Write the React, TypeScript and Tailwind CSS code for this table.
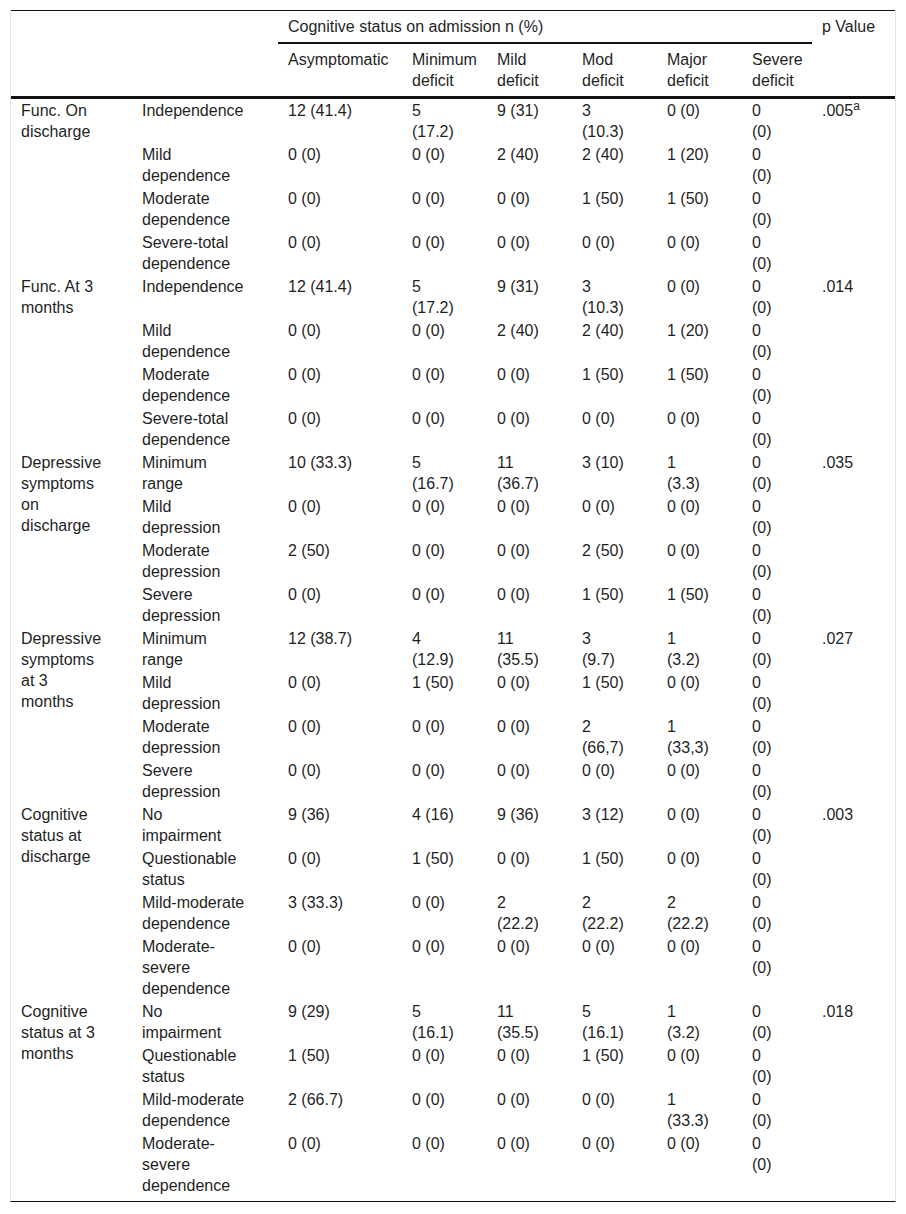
import React from "react";

type Row = { label: string; cells: string[] };
type Group = { label: string; p: React.ReactNode; rows: Row[] };

const funcRows: Row[] = [
  { label: "Independence", cells: ["12 (41.4)", "5|(17.2)", "9 (31)", "3|(10.3)", "0 (0)", "0|(0)"] },
  { label: "Mild|dependence", cells: ["0 (0)", "0 (0)", "2 (40)", "2 (40)", "1 (20)", "0|(0)"] },
  { label: "Moderate|dependence", cells: ["0 (0)", "0 (0)", "0 (0)", "1 (50)", "1 (50)", "0|(0)"] },
  { label: "Severe-total|dependence", cells: ["0 (0)", "0 (0)", "0 (0)", "0 (0)", "0 (0)", "0|(0)"] },
];

const groups: Group[] = [
  {
    label: "Func. On|discharge",
    p: (
      <>
        .005<sup className="text-[12px]">a</sup>
      </>
    ),
    rows: funcRows,
  },
  { label: "Func. At 3|months", p: ".014", rows: funcRows },
  {
    label: "Depressive|symptoms|on|discharge",
    p: ".035",
    rows: [
      { label: "Minimum|range", cells: ["10 (33.3)", "5|(16.7)", "11|(36.7)", "3 (10)", "1|(3.3)", "0|(0)"] },
      { label: "Mild|depression", cells: ["0 (0)", "0 (0)", "0 (0)", "0 (0)", "0 (0)", "0|(0)"] },
      { label: "Moderate|depression", cells: ["2 (50)", "0 (0)", "0 (0)", "2 (50)", "0 (0)", "0|(0)"] },
      { label: "Severe|depression", cells: ["0 (0)", "0 (0)", "0 (0)", "1 (50)", "1 (50)", "0|(0)"] },
    ],
  },
  {
    label: "Depressive|symptoms|at 3|months",
    p: ".027",
    rows: [
      { label: "Minimum|range", cells: ["12 (38.7)", "4|(12.9)", "11|(35.5)", "3|(9.7)", "1|(3.2)", "0|(0)"] },
      { label: "Mild|depression", cells: ["0 (0)", "1 (50)", "0 (0)", "1 (50)", "0 (0)", "0|(0)"] },
      { label: "Moderate|depression", cells: ["0 (0)", "0 (0)", "0 (0)", "2|(66,7)", "1|(33,3)", "0|(0)"] },
      { label: "Severe|depression", cells: ["0 (0)", "0 (0)", "0 (0)", "0 (0)", "0 (0)", "0|(0)"] },
    ],
  },
  {
    label: "Cognitive|status at|discharge",
    p: ".003",
    rows: [
      { label: "No|impairment", cells: ["9 (36)", "4 (16)", "9 (36)", "3 (12)", "0 (0)", "0|(0)"] },
      { label: "Questionable|status", cells: ["0 (0)", "1 (50)", "0 (0)", "1 (50)", "0 (0)", "0|(0)"] },
      { label: "Mild-moderate|dependence", cells: ["3 (33.3)", "0 (0)", "2|(22.2)", "2|(22.2)", "2|(22.2)", "0|(0)"] },
      { label: "Moderate-|severe|dependence", cells: ["0 (0)", "0 (0)", "0 (0)", "0 (0)", "0 (0)", "0|(0)"] },
    ],
  },
  {
    label: "Cognitive|status at 3|months",
    p: ".018",
    rows: [
      { label: "No|impairment", cells: ["9 (29)", "5|(16.1)", "11|(35.5)", "5|(16.1)", "1|(3.2)", "0|(0)"] },
      { label: "Questionable|status", cells: ["1 (50)", "0 (0)", "0 (0)", "1 (50)", "0 (0)", "0|(0)"] },
      { label: "Mild-moderate|dependence", cells: ["2 (66.7)", "0 (0)", "0 (0)", "0 (0)", "1|(33.3)", "0|(0)"] },
      { label: "Moderate-|severe|dependence", cells: ["0 (0)", "0 (0)", "0 (0)", "0 (0)", "0 (0)", "0|(0)"] },
    ],
  },
];

function Lines({ text }: { text: string }) {
  const parts = text.split("|");
  return (
    <>
      {parts.map((p, i) => (
        <React.Fragment key={i}>
          {i > 0 && <br />}
          {p}
        </React.Fragment>
      ))}
    </>
  );
}

const td = "align-top text-left py-px pl-[10px] pr-0 whitespace-nowrap font-normal";
const th = "align-top text-left pt-[5px] pb-[5px] pl-[10px] pr-0 whitespace-nowrap font-normal";

export default function App() {
  return (
    <div
      className="bg-white text-[#1f1f1f] text-[16px] leading-[21px] min-h-[1214px]"
      style={{ fontFamily: '"Liberation Sans", Arial, sans-serif' }}
    >
      <div className="pt-[10px] pl-[10px]">
        <div className="w-[886px] border-l border-r border-[#e2e2e2] border-b border-b-[#111] pb-[4px]">
          <table className="table-fixed border-separate border-spacing-0 w-[884px]">
            <colgroup>
              <col className="w-[121px]" />
              <col className="w-[146px]" />
              <col className="w-[124px]" />
              <col className="w-[85px]" />
              <col className="w-[85px]" />
              <col className="w-[85px]" />
              <col className="w-[85px]" />
              <col className="w-[70px]" />
              <col className="w-[83px]" />
            </colgroup>
            <thead>
              <tr>
                <th rowSpan={2} className={`${th} border-t border-t-[#111] border-b-[3px] border-b-[#111]`}></th>
                <th rowSpan={2} className={`${th} border-t border-t-[#111] border-b-[3px] border-b-[#111]`}></th>
                <th colSpan={6} className={`${th} border-t border-t-[#111] border-b-2 border-b-[#111]`}>
                  Cognitive status on admission n (%)
                </th>
                <th rowSpan={2} className={`${th} border-t border-t-[#111] border-b-[3px] border-b-[#111]`}>
                  p Value
                </th>
              </tr>
              <tr>
                {["Asymptomatic", "Minimum|deficit", "Mild|deficit", "Mod|deficit", "Major|deficit", "Severe|deficit"].map(
                  (h, i) => (
                    <th key={i} className={`${th} pb-[4px] border-b-[3px] border-b-[#111]`}>
                      <Lines text={h} />
                    </th>
                  )
                )}
              </tr>
            </thead>
            <tbody>
              {groups.map((g, gi) =>
                g.rows.map((r, ri) => (
                  <tr key={`${gi}-${ri}`}>
                    {ri === 0 && (
                      <td rowSpan={g.rows.length} className={td}>
                        <Lines text={g.label} />
                      </td>
                    )}
                    <td className={td}>
                      <Lines text={r.label} />
                    </td>
                    {r.cells.map((c, ci) => (
                      <td key={ci} className={td}>
                        <Lines text={c} />
                      </td>
                    ))}
                    {ri === 0 && (
                      <td rowSpan={g.rows.length} className={td}>
                        {g.p}
                      </td>
                    )}
                  </tr>
                ))
              )}
            </tbody>
          </table>
        </div>
      </div>
    </div>
  );
}
